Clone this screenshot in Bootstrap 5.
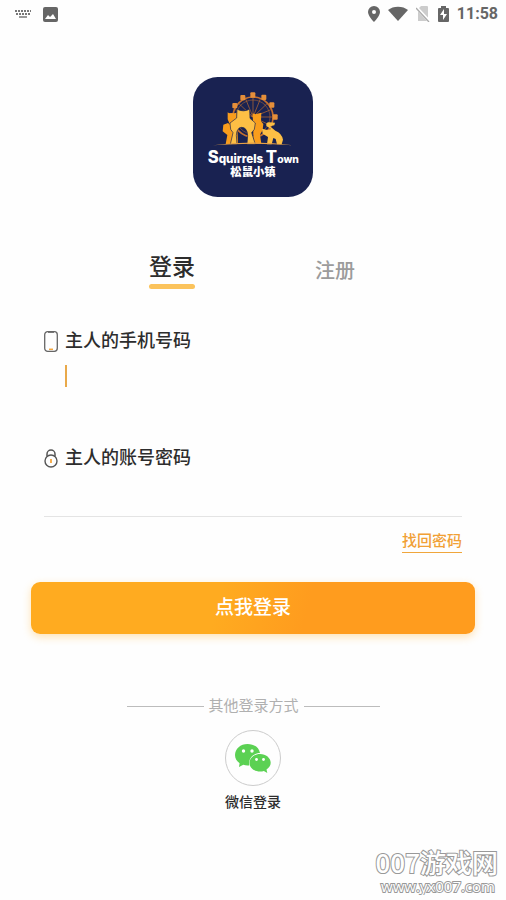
<!DOCTYPE html>
<html lang="zh-CN">
<head>
<meta charset="utf-8">
<meta name="viewport" content="width=device-width, initial-scale=1">
<title>松鼠小镇 登录</title>
<link rel="stylesheet" href="https://cdn.jsdelivr.net/npm/bootstrap@5.3.0/dist/css/bootstrap.min.css">
<style>
body{font-family:Roboto,"Noto Sans CJK SC",sans-serif;color:#2d2d2d;background:#fefefe;line-height:1.5}
.status-bar{height:28px;color:#666;font-size:16px;font-weight:700}
.app-logo{width:120px;height:120px;margin-top:49px}
.auth-tabs{margin-top:55px;gap:120px;padding-right:2px}
.auth-tabs .tab-btn{border:0;background:none;padding:0;line-height:38px;font-size:20px;color:#9b9b9b;font-weight:500}
.auth-tabs .tab-btn.active{font-size:23px;line-height:32px;color:#2d2d2d}
.auth-tabs .tab-btn.active::after{content:"";display:block;height:5px;border-radius:3px;background:#fbc35c}
.form-area{padding:0 44px;margin-top:38px}
.field-label{font-size:18px;line-height:26px;font-weight:500;gap:7px}
.line-input{border:0;border-radius:0;background:none;box-shadow:none;outline:0;padding:0;display:block;width:100%}
.phone-input{height:22px;margin-top:11px}
.caret-row{padding-left:21px}
.caret-row .line-input{border-left:2px solid #e9a94a}
.pass-input{height:46px;border-bottom:1px solid #e4e4e4}
.field-gap{margin-top:58px}
.find-link{font-size:15px;line-height:22px;margin-top:13px;color:#f1a035;font-weight:500;text-decoration:none;border-bottom:1px solid #f0a63c}
.login-btn{margin:29px 31px 0;height:52px;border:0;border-radius:9px;color:#fff;font-size:19px;font-weight:500;padding-top:2px;background:linear-gradient(105deg,#ffab20 0%,#ffab20 42%,#ff9c1e 62%);box-shadow:0 3px 8px #ffab2055}
.other-row{margin:61px 126px 0 127px;gap:5px;font-size:15px;line-height:22px;color:#b0b0b0}
.rule{height:1px;background:#bcbcbc}
.wechat-btn{border:0;background:none;padding:0;margin-top:13px;font-size:14px;line-height:20px;font-weight:500;color:#2d2d2d}
.wechat-ring{width:56px;height:56px;border:1px solid #ccc;margin-bottom:6px}
.site-mark{margin:33px 8px 0 0;color:#fff;paint-order:stroke fill;-webkit-text-stroke:2px #999;line-height:30px;font-family:"Noto Sans CJK SC",sans-serif;font-size:26px;font-weight:500}
.site-mark .site-url{font-family:"Open Sans",sans-serif;font-size:15px;line-height:18px;margin-right:3px}
</style>
</head>
<body>
<header class="status-bar d-flex justify-content-between align-items-center">
  <div class="d-flex align-items-center gap-2 ps-2 ms-1">
    <svg width="19" height="12" viewBox="0 0 19 12" fill="none" stroke="#777" stroke-width="2" aria-hidden="true"><path d="M3 3h16M4 6h14" stroke-dasharray="2 1"/><path d="M7 9h8" stroke-width="1.5"/></svg>
    <svg class="ms-1" width="15" height="15" viewBox="0 0 15 15" aria-hidden="true"><rect width="15" height="15" rx="2" fill="#666"/><path d="M2 12l3-4 2 2 3-3 3 5z" fill="#fff"/></svg>
  </div>
  <div class="d-flex align-items-center pe-2">
    <svg width="12" height="16" viewBox="0 0 12 16" aria-hidden="true"><path fill="#666" fill-rule="evenodd" d="M6 0a6 6 0 0 0-6 6c0 4 6 10 6 10s6-6 6-10a6 6 0 0 0-6-6zm0 4a2 2 0 1 1 0 4 2 2 0 0 1 0-4z"/></svg>
    <svg class="ms-2" width="20" height="16" viewBox="0 0 20 16" aria-hidden="true"><path fill="#666" d="M0 4C5-.5 15-.5 20 4L10 15z"/></svg>
    <svg class="ms-2" width="14" height="16" viewBox="0 0 14 16" aria-hidden="true"><path fill="#ccc" d="M5 0h6q1 0 1 1v14H2V3z"/><path d="M0 1l14 15" stroke="#fff" stroke-width="3"/><path d="M0 2l13 14" stroke="#aaa" stroke-width="1.3"/></svg>
    <svg class="ms-2" width="11" height="16" viewBox="0 0 11 16" aria-hidden="true"><path fill="#666" d="M3 0h5v2h2q1 0 1 1v12q0 1-1 1H1q-1 0-1-1V3q0-1 1-1h2z"/><path fill="#fff" d="M6 3L2 9h3v5l4-6H6z"/></svg>
    <span class="ms-2">11:58</span>
  </div>
</header>

<main>
  <div class="text-center">
    <svg class="app-logo" viewBox="15 15 360 360" role="img" aria-label="Squirrels Town 松鼠小镇">
      <rect x="15" y="15" width="360" height="360" rx="74" fill="#192251"/>
      <g stroke="#c4702f" fill="none">
        <circle cx="195" cy="135" r="60" stroke-width="5"/>
        <circle cx="195" cy="135" r="51" stroke-width="1.5"/>
        <path stroke-width="2" d="M195 135V78M195 135l22-54M195 135l42-40M195 135l54-22M195 135h58M195 135l52 25M195 135l-22-54M195 135l-42-40M195 135l-54-22"/>
      </g>
      <g fill="#e58f3a">
        <rect x="187" y="61" width="15" height="16" rx="3"/><rect x="157" y="69" width="15" height="16" rx="3"/><rect x="220" y="68" width="15" height="16" rx="3"/><rect x="133" y="93" width="15" height="16" rx="3"/><rect x="244" y="91" width="15" height="16" rx="3"/><rect x="254" y="127" width="15" height="16" rx="3"/><rect x="123" y="123" width="15" height="16" rx="3"/>
      </g>
      <path fill="#f99d1c" d="M119 121L127 126L146 122L150 215L113 216L118 189L104 178L106 158L120 153L126 158L119 142ZM194 124L202 127L220 122L219 148L226 156L224 173L216 188L220 215H197Z"/>
      <path fill="#fdbf45" stroke="#192251" stroke-width="2" d="M147 111L155 115Q166 118 177 115L185 111L186 139L202 153L199 172L191 182L202 217H177L179 190Q177 166 161 166Q146 167 145 190L147 217H127L135 182L128 172L126 153L146 138Z"/>
      <path fill="#fdbf45" d="M222 170L238 174L249 171L235 162Q233 150 244 151L261 152L259 160L246 163L262 176Q282 184 285 203L281 217H267L263 201L256 198L251 217H237L240 195L224 185Z"/>
      <path fill="#e6a046" d="M75 220q120-17 240 0-120-9-240 0z"/>
      <g fill="#fff">
        <text x="59" y="274" font-family="Inter,sans-serif" font-weight="800" font-size="35"><tspan font-size="50">S</tspan>quirrels <tspan font-size="50">T</tspan><tspan font-size="31">own</tspan></text>
        <text x="127" y="313" font-family="Noto Sans CJK SC,sans-serif" font-weight="900" font-size="34">松鼠小镇</text>
      </g>
    </svg>
  </div>

  <div class="auth-tabs d-flex justify-content-center align-items-start">
    <button type="button" class="tab-btn active">登录</button>
    <button type="button" class="tab-btn">注册</button>
  </div>

  <form>
    <div class="form-area d-flex flex-column">
      <label for="phone" class="field-label d-flex align-items-center">
        <svg width="14" height="21" viewBox="0 0 14 21" fill="none" aria-hidden="true"><rect x=".7" y=".7" width="12.6" height="19.6" rx="3" stroke="#666" stroke-width="1.3"/><path d="M4 1.5h6" stroke="#777"/><path d="M5 18.3h4" stroke="#f5a63d" stroke-width="1.5"/></svg>
        主人的手机号码
      </label>
      <div class="caret-row"><input id="phone" type="tel" class="line-input phone-input"></div>
      <label for="password" class="field-label field-gap d-flex align-items-center">
        <svg width="14" height="19" viewBox="0 0 14 19" fill="none" aria-hidden="true"><circle cx="7" cy="12" r="6" stroke="#555" stroke-width="1.4"/><path d="M3 7V5a4 4 0 0 1 8 0v2" stroke="#555" stroke-width="1.5"/><path d="M7 10v4" stroke="#f5a63d" stroke-width="1.8"/></svg>
        主人的账号密码
      </label>
      <input id="password" type="password" class="line-input pass-input">
      <a href="#" class="find-link align-self-end">找回密码</a>
    </div>
    <div class="d-grid"><button type="submit" class="login-btn">点我登录</button></div>
  </form>

  <div class="other-row d-flex align-items-center">
    <span class="rule flex-fill"></span><span class="text-nowrap">其他登录方式</span><span class="rule flex-fill"></span>
  </div>
  <div class="text-center">
    <button type="button" class="wechat-btn">
      <span class="wechat-ring rounded-circle d-flex align-items-center justify-content-center mx-auto">
        <svg width="36" height="29" viewBox="0 0 36 29" aria-hidden="true"><path fill="#5bd153" d="M12.500 0C5.500 0 0 4.800 0 11c0 3.500 1.800 6.300 4.600 8.200L4 23l4.300-2.200c1.800.6 3.700.8 6 .6C13 15 18 9 25 9 24 3.500 19 0 12.500 0z"/><path fill="#5bd153" d="M25 10c-6 0-10.500 4-10.500 8.700 0 5 4.500 8.800 10.500 8.800 1.400 0 2.700-.2 3.900-.6L32.300 29l-.8-3.600c2.600-1.700 4.200-4 4.200-6.700C35.700 14 31 10 25 10z"/><g fill="#fff"><circle cx="8.500" cy="7" r="1.700"/><circle cx="17" cy="7" r="1.700"/><circle cx="21.500" cy="15.500" r="1.400"/><circle cx="28.500" cy="15.500" r="1.400"/></g></svg>
      </span>
      微信登录
    </button>
  </div>
</main>
<footer class="site-mark text-end">
  <div>007游戏网</div>
  <div class="site-url">www.yx007.com</div>
</footer>
<script src="https://cdn.jsdelivr.net/npm/bootstrap@5.3.0/dist/js/bootstrap.bundle.min.js"></script>
</body>
</html>
